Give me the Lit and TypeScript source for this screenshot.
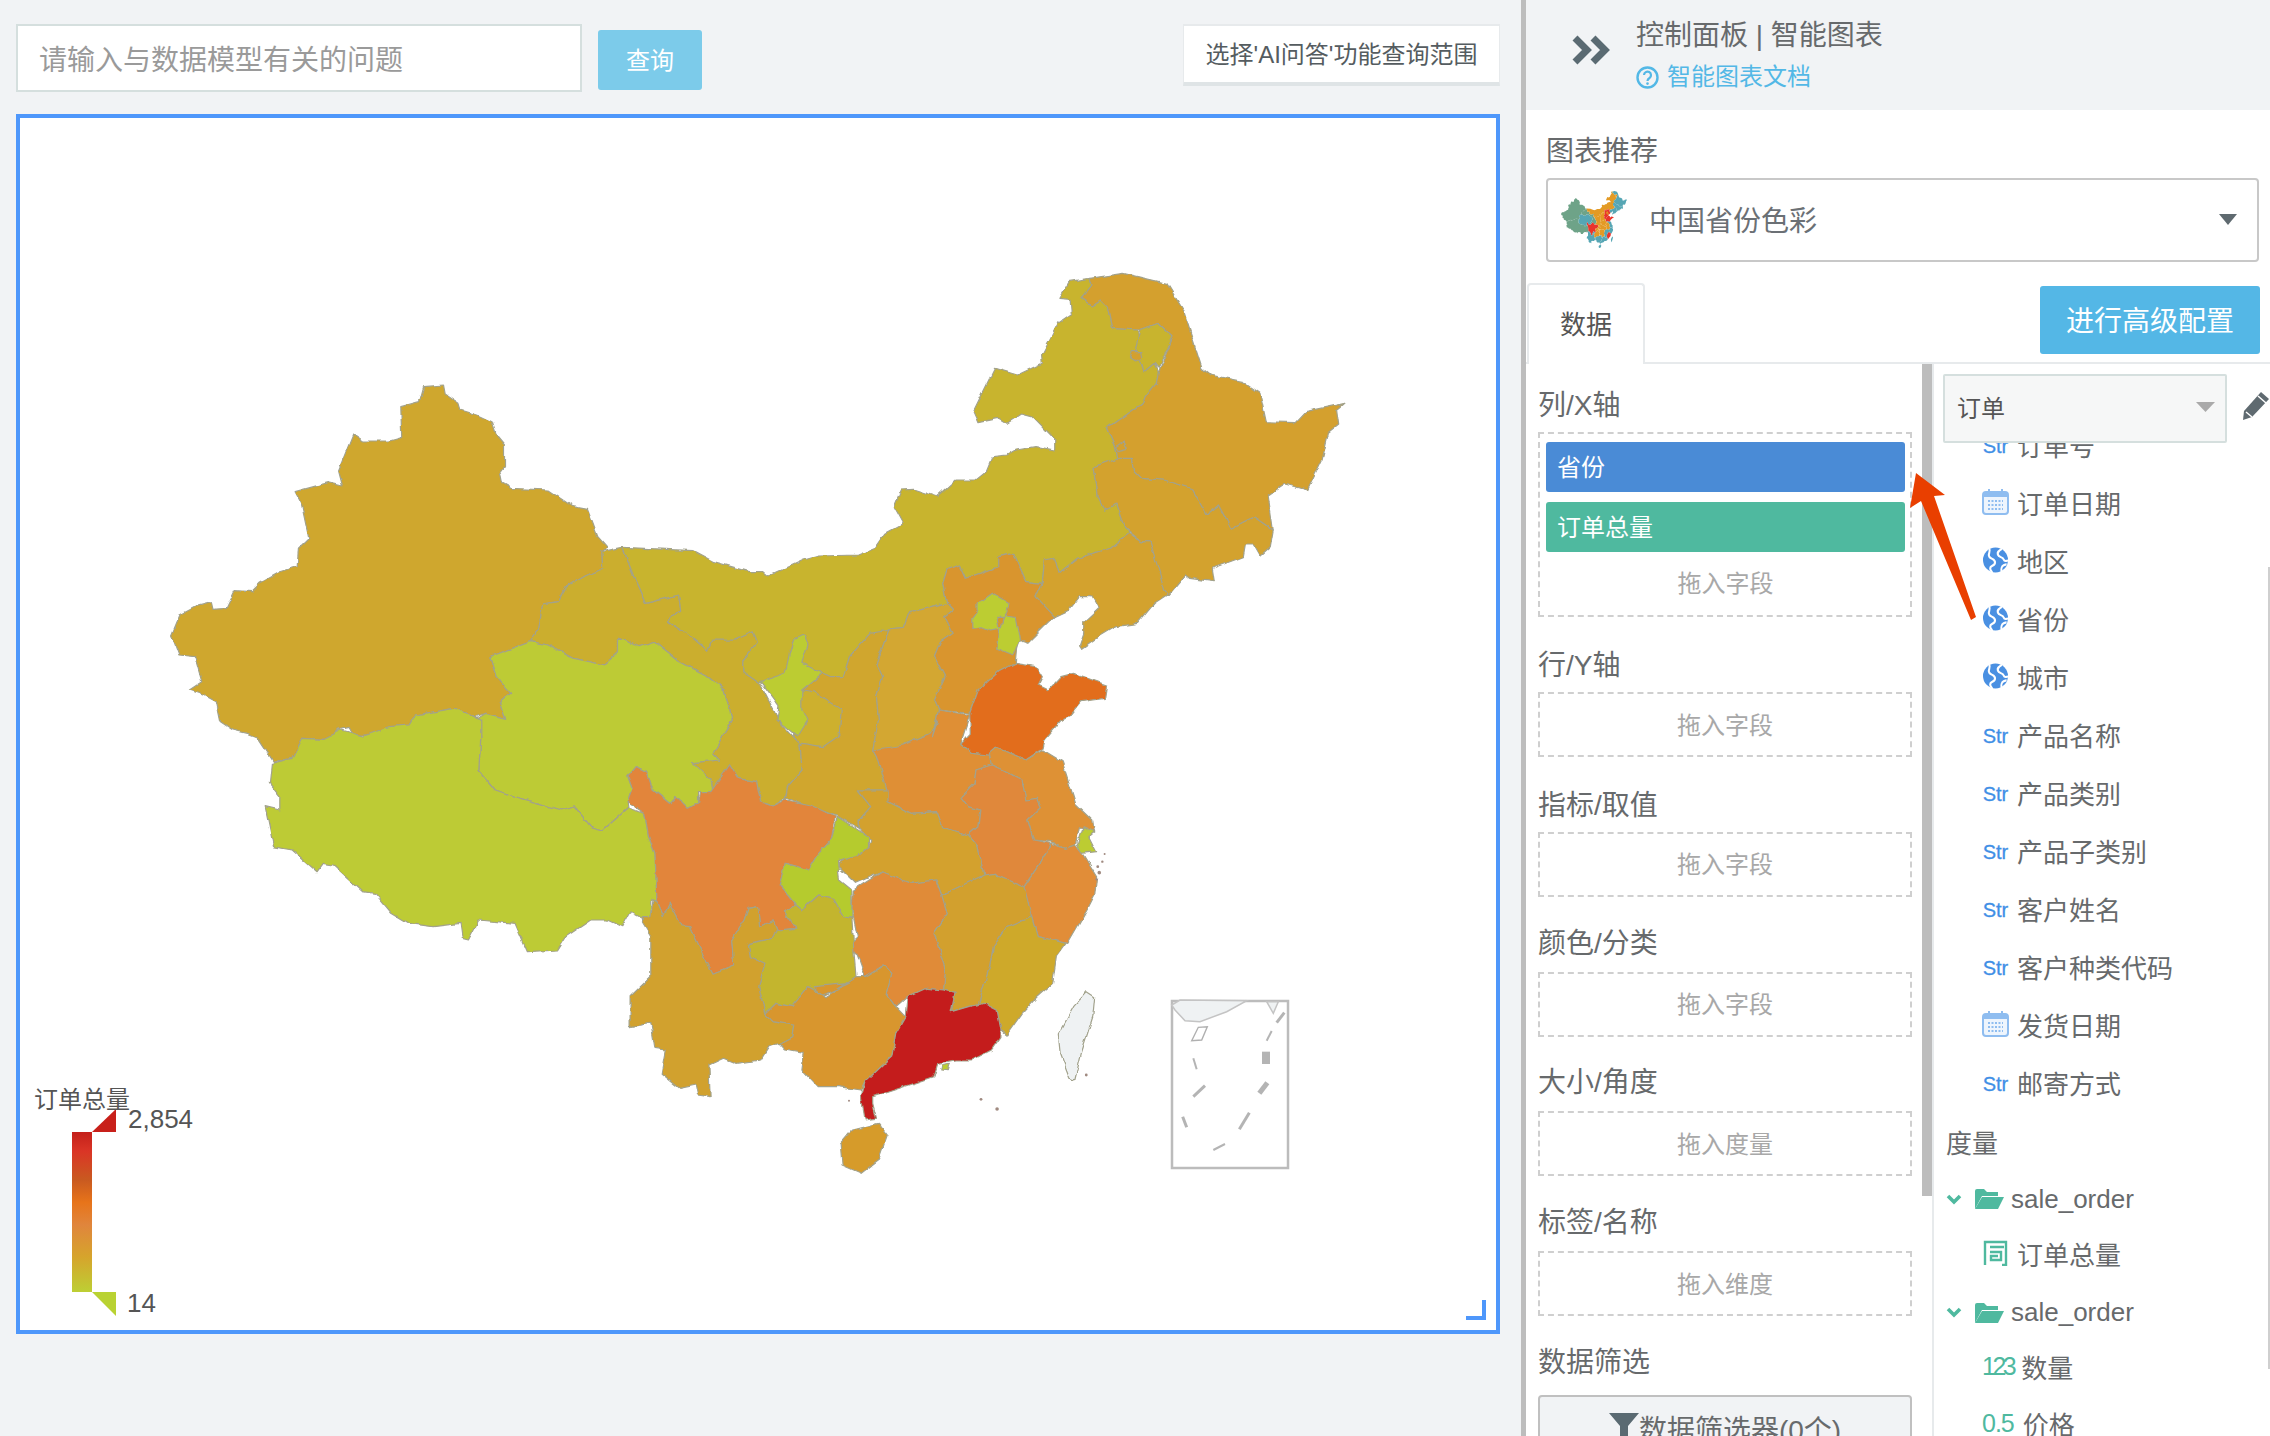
import { LitElement, html, css, svg } from "lit";
import { customElement } from "lit/decorators.js";

type Z = [number, number, number, number];
const Z2: Z = [150, 240, 2.412, 3];
const Z3: Z = [750, 240, 2.412, 3];
const Z4: Z = [230, 720, 2.412, 3];
const Z5: Z = [800, 720, 2.613, 3];
const Z11: Z = [1130, 970, 3, 3];

function pts(z: Z, a: number[]): string {
  const o: string[] = [];
  for (let i = 0; i < a.length; i += 2) {
    o.push(`${(z[0] + a[i] / z[2]).toFixed(1)},${(z[1] + a[i + 1] / z[3]).toFixed(1)}`);
  }
  return o.join(" ");
}

type Prov = { c: string; t: string; s: [Z, number[]][] };
const TEAL = "#56a6b4", GRN = "#6ea388", ORG = "#e39a24", RED = "#e8352b";

const PROVINCES: Prov[] = [
  { c: "#cfa72f", t: GRN, s: [[Z2, [660,440,708,435,712,462,745,490,750,510,790,525,825,545,835,585,855,615,855,680,843,700,848,730,870,745,960,750,1020,800,1055,808,1080,890,1103,922,1090,935,1092,985,1050,1008,1005,1040,985,1085,945,1092,935,1170,918,1205,820,1250,835,1310,870,1360,845,1385,858,1435,810,1420,785,1430,735,1405,640,1425,625,1455,590,1460,545,1485,490,1485,480,1462,455,1470,435,1497]], [Z4, [225,58,175,55,150,115,105,125]], [Z2, [258,1490,235,1480,200,1470,170,1445,160,1385,130,1365,95,1350,125,1325,108,1250,70,1245,52,1185,72,1125,110,1100,148,1088,152,1108,185,1105,205,1052,245,1055,265,1030,315,995,355,980,358,925,383,895,365,790,350,755,430,728,465,738,455,690,490,582,515,603,575,603,607,592,605,500,650,485]]] },
  { c: "#cbae2f", t: GRN, s: [[Z2, [1090,935,1140,922,1170,1020,1195,1090,1275,1065,1280,1110,1250,1145,1305,1190,1345,1230,1355,1200,1410,1200,1455,1175,1465,1210,1430,1260,1430,1295,1470,1330,1500,1400,1520,1450]], [Z4, [1375,75,1380,150,1345,200,1340,235,1310,258,1280,245,1270,185,1225,175,1205,135,1165,215,1160,180,1115,128,1180,120,1165,100,1210,0]], [Z2, [1380,1490,1405,1440,1385,1350,1340,1305,1270,1260,1215,1205,1180,1220,1130,1195,1130,1235,1095,1275,1020,1255,960,1215,918,1205,935,1170,945,1092,985,1085,1005,1040,1050,1008,1092,985]]] },
  { c: "#c8b42e", t: ORG, s: [[Z2, [1140,922,1310,932,1360,965,1445,995,1478,995,1490,1008]], [Z3, [50,1005,130,960,165,948,260,945,300,925,325,880,370,850,348,800,365,750,395,748,450,770,495,720,545,720,570,695,585,650,620,645,640,630,690,620,735,630,735,600,680,530,655,522,620,550,600,535,550,548,538,515,590,385,645,405,705,370,703,345,745,245,775,220,772,178,745,175,770,125,820,115,825,135,800,175,825,195,845,180,865,205,875,265,935,270,945,370,950,395,975,370,985,400,980,430,955,470,945,490,860,565,880,620,885,655,830,680,840,770,855,810,885,795,905,870,915,880,870,925,790,955,745,1000,735,955,710,960,705,1030,665,1025,635,940,600,950,600,980,520,1015,505,975,475,990,465,1030,475,1090,430,1105,385,1115,370,1165,335,1170,320,1185,290,1180,240,1250,225,1310,195,1310,130,1275,100,1340]], [Z2, [1530,1305,1470,1330,1430,1295,1430,1260,1465,1210,1455,1175,1410,1200,1355,1200,1345,1230,1305,1190,1250,1145,1280,1110,1275,1065,1195,1090,1170,1020]]] },
  { c: "#bdcb34", t: TEAL, s: [[Z2, [820,1250,918,1205,960,1215,1020,1255,1095,1275,1130,1235,1130,1195,1180,1220,1215,1205,1270,1260,1340,1305,1385,1350,1405,1440,1380,1490]], [Z4, [1210,0,1165,100,1180,120,1115,128,1160,180,1165,215,1130,215,1130,250,1100,262,1075,230,1060,250,1020,210,1005,155,980,140,960,170,970,205,958,245,960,265,900,330,870,320,830,258,800,270,700,235,640,210,600,150,605,50,595,0]], [Z2, [785,1440,810,1420,858,1435,845,1385,870,1360,835,1310]]] },
  { c: "#bdcb34", t: GRN, s: [[Z4, [100,130,150,115,175,55,225,58,270,30,320,48,385,20]], [Z2, [625,1455,640,1425,735,1405,785,1430,798,1442]], [Z4, [605,50,600,150,640,210,700,235,800,270,830,258,870,320,900,330,960,265,1000,280,1010,350,1025,400,1030,545,1015,535,1015,590,995,595,965,575,945,620,910,600,870,600,810,650,790,690,715,695,685,610,600,600,575,660,560,655,555,610,490,620,430,610,390,580,350,520,320,515,250,435,225,430,210,455,150,390,105,380,85,260,120,270,120,230,95,190]]] },
  { c: "#d0a62f", t: ORG, s: [[Z3, [290,1180,335,1170,305,1270,320,1310,305,1370]], [Z5, [205,0,190,90,200,110,230,210,150,210,185,260,155,300,155,325,100,290,30,260,0,250]], [Z4, [1400,258,1340,235,1345,200,1380,150,1375,75,1360,50]], [Z3, [105,1400,130,1275,195,1310,225,1310,240,1250]]] },
  { c: "#cdb02f", t: ORG, s: [[Z3, [125,1350,155,1355,220,1410,215,1490]], [Z5, [105,45,60,80,5,70]], [Z4, [1375,75,1360,50]]] },
  { c: "#bccc33", t: ORG, s: [[Z3, [105,1200,130,1185,140,1215,125,1270,175,1300,125,1350,125,1410,140,1440,115,1490,65,1440,70,1400,25,1325,85,1300,95,1240]]] },
  { c: "#d3a730", t: ORG, s: [[Z3, [335,1170,370,1165,385,1115,430,1105,475,1090,490,1110,470,1130,490,1180,460,1205,445,1250,470,1310,445,1380,455,1410,440,1490]], [Z5, [360,0,340,40,270,75,200,105,190,90,205,0]], [Z3, [305,1370,320,1310,305,1270]]] },
  { c: "#d9952f", t: RED, s: [[Z3, [465,1030,475,990,505,975,520,1015,600,980,600,950,635,940,665,1025,705,1030,690,1070,735,1130,710,1160,670,1210,645,1200,640,1270,600,1295,550,1350,530,1420,455,1410,445,1380,470,1310,445,1250,460,1205,490,1180,470,1130,490,1110,475,1090]]] },
  { c: "#bccd33", t: ORG, s: [[Z3, [585,1060,625,1090,620,1115,600,1165,580,1170,560,1160,535,1165,535,1135,550,1110,550,1090]]] },
  { c: "#bccd33", t: ORG, s: [[Z3, [615,1125,640,1130,650,1200,635,1245,595,1225,600,1160]]] },
  { c: "#d9952f", t: ORG, s: [[Z3, [595,1132,610,1132,607,1160,600,1160]]] },
  { c: "#d3a22f", t: TEAL, s: [[Z3, [915,880,945,905,965,905,1005,1050,1005,1065,975,1090,935,1150,880,1160,840,1190,800,1225,795,1215,805,1180,805,1145,840,1105,825,1070,795,1070,770,1110,735,1130,690,1070,705,1030,710,960,735,955,745,1000,790,955,870,925]]] },
  { c: "#d3a22f", t: TEAL, s: [[Z3, [885,655,920,655,925,690,945,715,1000,720,1065,745,1100,825,1130,795,1160,865,1215,830,1262,870,1255,920,1230,948,1215,915,1195,915,1190,950,1115,985,1120,1025,1060,1015,1050,1005,1010,1065,1000,1050,965,905,945,905,915,875,905,870,885,795,855,810,840,770,830,680]]] },
  { c: "#d4a02f", t: TEAL, s: [[Z3, [820,115,900,100,1005,130,1045,210,1090,385,1110,405,1190,425,1230,460,1245,545,1315,548,1340,515,1435,490,1415,510,1420,555,1395,580,1380,660,1345,750,1290,732,1250,765,1262,870,1215,830,1160,865,1130,795,1100,825,1065,745,1000,720,945,715,925,690,920,655,885,655,880,620,860,565,945,490,955,470,980,430,985,400,1020,290,985,250,940,270,875,265,865,205,845,180,825,195,800,175,825,135]]] },
  { c: "#c8b42e", t: ORG, s: [[Z3, [940,270,985,250,1020,290,985,385,975,370,950,395,945,370,930,325]]] },
  { c: "#d4a02f", t: ORG, s: [[Z3, [920,335,942,335,945,352,930,360,915,348]]] },
  { c: "#d4a02f", t: ORG, s: [[Z3, [882,622,902,605,910,625,888,632]]] },
  { c: "#df8f34", t: ORG, s: [[Z5, [190,90,270,75,340,40,360,0]], [Z3, [440,1490,455,1410,530,1425]], [Z5, [420,70,450,100,495,105,500,135,460,150,455,190,420,230,440,260,470,270,465,320,440,345,370,320,355,275,290,280,230,245,225,210,200,110]]] },
  { c: "#e26d1c", t: RED, s: [[Z3, [640,1270,690,1280,705,1310,695,1335,720,1350,750,1310,780,1300,860,1335,855,1375,800,1385,770,1430]], [Z5, [685,0,640,60,635,85,590,120,550,100,510,85,495,105,450,100,420,70,445,40]], [Z3, [530,1420,550,1350,600,1295]]] },
  { c: "#de9135", t: TEAL, s: [[Z5, [495,100,510,85,550,100,590,120,635,90,685,125,720,250,765,300,770,340,730,320,720,375,690,385,655,365,610,360,595,300,630,260,620,235,590,240,580,180,530,150,500,135]]] },
  { c: "#bccc33", t: TEAL, s: [[Z5, [740,320,770,335,755,350,775,395,735,400,725,375]]] },
  { c: "#e0883a", t: ORG, s: [[Z5, [500,135,530,150,580,180,590,240,620,235,630,260,595,300,610,360,655,370,630,425,585,500,520,470,510,460,480,465,465,380,440,345,465,320,470,270,440,260,420,230,455,190,460,150]]] },
  { c: "#e18d38", t: TEAL, s: [[Z5, [655,370,690,385,720,375,740,405,775,470,770,525,750,570,725,620,700,670,660,660,620,650,605,590,580,510,630,425]]] },
  { c: "#cea92c", t: RED, s: [[Z5, [605,590,620,650,660,660,695,670,670,710,660,790,620,830,580,880,540,945,525,930,515,870,480,850,465,855,495,740,505,680,540,620]]] },
  { c: "#d2a02d", t: TEAL, s: [[Z5, [370,525,480,465,510,460,520,470,585,500,605,590,540,620,505,680,495,740,465,855,440,860,395,875,405,820,375,810,380,750,350,640,385,580]]] },
  { c: "#d3a12e", t: ORG, s: [[Z5, [230,210,230,245,290,280,355,275,370,320,440,345,465,380,480,465,370,525,355,480,290,490,215,455,145,490,100,440,100,430,180,380,185,365,155,325,155,300,185,260,150,210]]] },
  { c: "#e08b38", t: ORG, s: [[Z5, [140,510,215,455,290,490,355,480,370,525,385,580,350,640,380,750,375,810,330,805,280,830,250,860,225,820,240,760,220,735,170,770,150,705,120,680,150,650,135,565]]] },
  { c: "#e2853a", t: RED, s: [[Z4, [960,170,980,140,1005,155,1020,210,1060,250,1075,230,1100,262,1130,250,1135,215,1160,215,1205,135,1225,175,1270,185,1280,245,1310,258,1340,240,1400,255,1460,290,1450,360,1420,400,1395,450,1340,430,1325,495,1365,555,1335,575,1365,625,1320,630,1310,600,1280,620,1275,560,1250,565,1240,600,1210,660,1215,735,1165,760,1145,715,1110,620,1090,618,1060,550,1045,590,1030,545,1025,400,1010,350,1000,280,958,245,970,205]]] },
  { c: "#b5cb2e", t: ORG, s: [[Z4, [1465,290,1540,350,1540,380,1510,410,1465,425,1470,480,1500,510,1500,595,1480,590,1455,535,1420,525,1380,570,1365,555,1325,495,1340,430,1370,440,1395,450,1420,400,1450,360]]] },
  { c: "#c3b52e", t: ORG, s: [[Z4, [1250,670,1310,655,1320,630,1365,625,1335,575,1365,555,1380,570,1420,525,1455,535,1480,590,1500,595,1505,700,1510,770,1495,790,1430,825,1395,800,1355,860,1315,850,1290,880,1275,800,1290,730,1255,710]]] },
  { c: "#d1a12d", t: TEAL, s: [[Z4, [1020,540,1030,545,1045,590,1060,550,1090,618,1110,620,1145,715,1165,760,1215,735,1210,660,1240,600,1250,565,1275,560,1280,620,1310,600,1320,630,1310,655,1250,670,1255,710,1290,730,1275,800,1290,880,1310,905,1360,915,1355,950,1325,970,1300,980,1280,1020,1220,1030,1190,1015,1155,1035,1158,1130,1130,1125,1125,1095,1085,1105,1040,1060,1050,990,1025,985,1015,910,965,920,965,830,1015,770,1015,650,995,610,995,590,1015,590]]] },
  { c: "#d8962e", t: TEAL, s: [[Z4, [1290,880,1315,850,1355,860,1395,800,1430,825,1495,790]], [Z5, [35,800,65,830,120,790,145,770,170,770,220,735,240,760,225,820,250,860,275,890,250,940,240,1010,170,1085,160,1110,100,1100,45,1100,5,1050]], [Z4, [1385,1000,1340,990,1325,970,1355,950,1360,915,1310,905]]] },
  { c: "#c41f1a", t: TEAL, s: [[Z5, [280,830,330,805,375,810,405,820,395,875,440,860,465,855,480,850,515,870,525,930,525,950,500,990,450,1020,405,1020,360,1030,350,1070,300,1090,220,1120,190,1130,190,1150,200,1195,170,1200,160,1130,170,1085,240,1010,250,940,275,890]]] },
  { c: "#bccc33", t: TEAL, s: [[Z5, [370,1035,390,1030,385,1052,368,1050]]] },
  { c: "#d69b2c", t: TEAL, s: [[Z5, [105,1270,135,1230,205,1210,228,1245,205,1320,160,1360,110,1335]]] },
  { c: "#eff2f3", t: TEAL, s: [[Z5, [750,815,770,830,765,890,735,1000,718,1080,705,1075,680,1000,675,945,715,860]]] },
];

const ISLANDS: [number, number, number][] = [
  [128,1142,1],[473,1138,1.4],[515,1167,1.8],[748,1065,1.4],[796,402,1],[790,425,1.2],[778,440,1.4],[782,458,1.8],[775,478,1.2],
];

const SEAS: [number, number, number, number, number][] = [
  [190,265,200,298,2],[190,380,225,347,3],[158,440,170,472,3],[250,540,285,522,2],[328,478,358,428,3],[388,370,412,338,5],[408,245,408,282,8],[410,212,425,183,2],[440,158,463,128,3],
];

const SLOTS = [
  { t: "行/Y轴", p: "拖入字段", low: true },
  { t: "指标/取值", p: "拖入字段", low: true },
  { t: "颜色/分类", p: "拖入字段", low: false },
  { t: "大小/角度", p: "拖入度量", low: false },
  { t: "标签/名称", p: "拖入维度", low: false },
];

const FIELDS: [string, string][] = [
  ["str", "订单号"], ["cal", "订单日期"], ["geo", "地区"], ["geo", "省份"], ["geo", "城市"],
  ["str", "产品名称"], ["str", "产品类别"], ["str", "产品子类别"], ["str", "客户姓名"],
  ["str", "客户种类代码"], ["cal", "发货日期"], ["str", "邮寄方式"],
];

const folderIcon = html`<svg class="folder" viewBox="0 0 30 20"><path d="M1 20V2a2 2 0 0 1 2-2h7l3 3h11v4H8L1 20z" fill="#4fb99f"/><path d="M8 8h22l-6 12H1z" fill="#4fb99f"/></svg>`;
const chevIcon = html`<svg class="chev" viewBox="0 0 16 11"><path d="M2 2l6 6 6-6" fill="none" stroke="#4fb99f" stroke-width="3.6"/></svg>`;
const calIcon = html`<svg class="ico" viewBox="0 0 27 26"><rect x="1" y="3" width="25" height="22" rx="3" fill="#eef5fd" stroke="#8fbdf0" stroke-width="2"/><rect x="1" y="3" width="25" height="5" fill="#8fbdf0"/><path d="M7 0v5M20 0v5" stroke="#8fbdf0" stroke-width="2"/><path d="M6 12h15M6 16h15M6 20h15" stroke="#8fbdf0" stroke-width="2" stroke-dasharray="2 1.5"/></svg>`;
const geoIcon = html`<svg class="ico" viewBox="0 0 27 27"><circle cx="13.5" cy="13.5" r="13" fill="#4a90e2"/><path d="M7 2c2 3-2 5 0 8s6 2 6 6-5 3-5 6 2 3 2 5M20 2c-3 2-5 3-4 6s5 2 6 5 3 1 5 1M20 26c-1-3 0-6 2-7s2-1 3-1" fill="none" stroke="#fff" stroke-width="2.2"/></svg>`;
const pencilIcon = html`<svg class="pencil" viewBox="0 0 28 30"><path d="M2 21L19 2l8 7L10 27l-9 3z" fill="#5f6a70"/><path d="M16 6l8 7M4 22l6 5" stroke="#fff" stroke-width="1.5"/></svg>`;

@customElement("app-root")
export class AppRoot extends LitElement {
  static styles = css`
    :host {
      display: block;
      width: 2270px;
      height: 1436px;
      position: relative;
      overflow: hidden;
      background: #f1f3f5;
      font-family: "Liberation Sans", "Noto Sans CJK SC", sans-serif;
      color: #676a6c;
    }
    .page { display: flex; height: 1436px; }
    .left { flex: 0 0 1521px; padding: 24px 21px 0 16px; box-sizing: border-box; }
    .top { display: flex; align-items: flex-start; height: 90px; }
    .ask {
      width: 566px; height: 68px; box-sizing: border-box;
      background: #fff; border: 2px solid #d5dfde; display: flex; align-items: center;
      padding-left: 21px; font-size: 28px; color: #9a9a9a;
    }
    .query {
      width: 104px; height: 60px; margin: 6px 0 0 16px; background: #7ccbea; color: #fff; box-sizing: border-box;
      border-radius: 3px; font-size: 24px; display: flex; align-items: center; justify-content: center; padding-bottom: 4px;
    }
    .scope {
      margin-left: auto; width: 317px; height: 62px; box-sizing: border-box; background: #fff;
      border: 1px solid #e7eaec; border-top-width: 2px; border-bottom: 4px solid #dfe4e6; padding-bottom: 4px;
      font-size: 24px; color: #555c60; display: flex; align-items: center; justify-content: center;
    }
    .chart {
      width: 1484px; height: 1220px; box-sizing: border-box; border: 4px solid #4e97fb;
      background: #fff; position: relative;
    }
    .chart > svg { display: block; width: 1476px; height: 1212px; }
    .lg { font-size: 24px; fill: #555; font-family: "Liberation Sans", "Noto Sans CJK SC", sans-serif; }
    .num-lg { font-size: 26px; }
    .handle {
      position: absolute; right: 10px; bottom: 10px; width: 16px; height: 16px;
      border-right: 4px solid #4e97fb; border-bottom: 4px solid #4e97fb;
    }
    .bar { flex: 0 0 5px; background: #bdbdbd; }
    .panel { flex: 1; background: #fff; display: flex; flex-direction: column; min-width: 0; }
    .head {
      height: 110px; background: #f1f3f5; display: flex; align-items: flex-start; padding-left: 46px; flex: none;
    }
    .dbl { width: 38px; height: 30px; margin-top: 35px; }
    .head-t { margin-left: 26px; padding-top: 16px; }
    .head-title { font-size: 28px; line-height: 40px; color: #676a6c; white-space: nowrap; }
    .doc { display: flex; align-items: center; font-size: 24px; line-height: 34px; color: #53b8e6; margin-top: 4px; }
    .doc svg { width: 23px; height: 23px; margin-right: 8px; }
    .rec { padding: 22px 11px 0 20px; flex: none; height: 173px; box-sizing: border-box; }
    .rec-l { font-size: 28px; line-height: 40px; }
    .select {
      margin-top: 6px; height: 84px; box-sizing: border-box; border: 2px solid #c8c8c8; border-radius: 4px;
      display: flex; align-items: center; padding: 0 0 2px 13px; font-size: 28px; color: #6b7075;
    }
    .select .thumb { width: 66px; height: 57px; margin-right: 22px; }
    .select .car { margin-left: auto; margin-right: 20px; width: 18px; height: 11px; }
    .tabs { height: 81px; flex: none; display: flex; align-items: flex-start; position: relative; border-bottom: 2px solid #e7eaec; box-sizing: border-box; }
    .tab {
      margin-left: 1px; width: 118px; height: 81px; box-sizing: border-box; border: 2px solid #e7eaec; border-bottom: none;
      border-radius: 4px 4px 0 0; background: #fff; font-size: 26px; display: flex; align-items: center; justify-content: center; color: #555; padding-bottom: 4px;
    }
    .adv {
      margin: 3px 10px 0 auto; width: 220px; height: 68px; background: #54b7e6; color: #fff; border-radius: 3px; box-sizing: border-box;
      font-size: 28px; display: flex; align-items: center; justify-content: center; padding-bottom: 2px;
    }
    .cols { flex: 1; display: flex; min-height: 0; }
    .c1 { flex: 0 0 396px; box-sizing: border-box; padding: 0 10px 0 12px; overflow: hidden; }
    .sb { flex: 0 0 10px; align-self: flex-start; height: 832px; background: #bdbdbd; }
    .c2 { flex: 1; border-left: 2px solid #e7eaec; display: flex; flex-direction: column; min-width: 0; position: relative; }
    .lab { font-size: 28px; height: 40px; line-height: 39px; color: #676a6c; white-space: nowrap; }
    .lab.low { line-height: 43px; }
    .first { margin-top: 20px; }
    .dash {
      margin-top: 8px; border: 2px dashed #cfcfcf; box-sizing: border-box; height: 65px; width: 374px; padding-bottom: 3px;
      display: flex; align-items: center; justify-content: center; color: #a8a8a8; font-size: 24px; margin-bottom: 26.75px;
    }
    .dash.big { height: 185px; display: block; padding: 8px 5px 0 6px; margin-bottom: 27px; }
    .pill { height: 50px; border-radius: 3px; color: #fff; font-size: 24px; display: flex; align-items: center; padding: 0 0 4px 11px; box-sizing: border-box; margin-bottom: 10px; }
    .pill.b { background: #4a8bd6; }
    .pill.g { background: #4fb99f; }
    .drop { height: 46px; display: flex; align-items: center; justify-content: center; color: #a8a8a8; padding-bottom: 8px; box-sizing: border-box; }
    .filter {
      margin-top: 12px; width: 374px; height: 90px; box-sizing: border-box; background: #f1f3f5; border: 2px solid #c0c0c0; border-radius: 4px;
      font-size: 28px; display: flex; justify-content: center; padding-top: 16px; color: #676a6c; white-space: nowrap;
    }
    .filter svg { width: 30px; height: 28px; flex: none; }
    .filter span { line-height: 36px; }
    .src { flex: none; display: flex; padding: 10px 0 0 9px; height: 79px; box-sizing: border-box; position: relative; z-index: 1; }
    .src-box {
      width: 284px; height: 69px; box-sizing: border-box; background: #f6f7f7; border: 2px solid #d5dfde; border-radius: 2px;
      display: flex; align-items: center; padding: 0 0 4px 12px; font-size: 24px; color: #555;
    }
    .src-box svg { margin-left: auto; margin-right: 10px; width: 19px; height: 10px; }
    .pencil { width: 28px; height: 30px; margin: 16px 0 0 15px; flex: none; }
    .list { flex: 1; overflow: hidden; min-height: 0; }
    .inner { margin-top: -28px; }
    .row { height: 58px; display: flex; align-items: center; padding-left: 48px; font-size: 26px; color: #676a6c; white-space: nowrap; }
    .ico { width: 27px; height: 26px; margin-right: 8px; flex: none; }
    .str { width: 27px; margin-right: 8px; padding-top: 5px; font-size: 20px; color: #3f8fe6; flex: none; text-align: center; -webkit-text-stroke: 0.3px #3f8fe6; }
    .sec { height: 56px; display: flex; align-items: center; padding-left: 12px; font-size: 26px; white-space: nowrap; }
    .sec.title { margin-top: 2px; }
    .sec.g1 { margin-top: 2px; }
    .sec.next { margin-top: 3.5px; }
    .chev { width: 16px; height: 11px; margin-right: 12px; flex: none; }
    .folder { width: 30px; height: 20px; margin-right: 7px; flex: none; }
    .row.m { height: 56px; margin-top: -2px; }
    .num { color: #4fb99f; font-size: 25px; margin-right: 8px; letter-spacing: -3.5px; flex: none; }
    .num.h { letter-spacing: -1px; margin-right: 9px; }
    .thumbbar { position: absolute; right: 0; top: 203px; width: 2px; height: 802px; background: #cfcfcf; }
    .arrow { position: absolute; left: 0; top: 0; width: 2270px; height: 1436px; pointer-events: none; }
  `;

  private map() {
    return svg`
      <defs>
        <filter id="rough" filterUnits="userSpaceOnUse" x="100" y="200" width="1300" height="1000">
          <feTurbulence type="fractalNoise" baseFrequency="0.09" numOctaves="2" seed="4" result="n"></feTurbulence>
          <feDisplacementMap in="SourceGraphic" in2="n" scale="5" xChannelSelector="R" yChannelSelector="G"></feDisplacementMap>
        </filter>
        <linearGradient id="lg" x1="0" y1="0" x2="0" y2="1">
          <stop offset="0" stop-color="#c4201a"></stop>
          <stop offset="0.12" stop-color="#da3526"></stop>
          <stop offset="0.3" stop-color="#c95a20"></stop>
          <stop offset="0.44" stop-color="#e7741a"></stop>
          <stop offset="0.58" stop-color="#e0853c"></stop>
          <stop offset="0.78" stop-color="#d6a42c"></stop>
          <stop offset="1" stop-color="#bdcf34"></stop>
        </linearGradient>
      </defs>
      <g stroke="#a2a28c" stroke-width="1.2" stroke-linejoin="round" filter="url(#rough)">
        ${PROVINCES.map((p) => svg`<polygon fill=${p.c} points=${p.s.map(([z, a]) => pts(z, a)).join(" ")}></polygon>`)}
      </g>
      ${ISLANDS.map(([x, y, r]) => svg`<circle cx=${800 + x / 2.613} cy=${720 + y / 3} r=${r} fill="#a08a80"></circle>`)}
      <g>
        <rect x="1172" y="1001" width="116" height="167" fill="#fff" stroke="#bcbcbc" stroke-width="2.5"></rect>
        <polygon points=${pts(Z11, [125,105,150,90,350,92,290,125,210,155,165,152,135,120])} fill="#eff2f3" stroke="#c4c4c4" stroke-width="1.5"></polygon>
        <polygon points=${pts(Z11, [410,95,445,95,430,130])} fill="#eff2f3" stroke="#c4c4c4" stroke-width="1.5"></polygon>
        <polygon points=${pts(Z11, [185,212,205,172,232,170,215,210])} fill="#fff" stroke="#b0b0b0" stroke-width="1.4"></polygon>
        ${SEAS.map(([a, b, c, d, w]) => svg`<line x1=${1130 + a / 3} y1=${970 + b / 3} x2=${1130 + c / 3} y2=${970 + d / 3} stroke="#b4b4b4" stroke-width=${w}></line>`)}
      </g>
      <rect x="72" y="1132" width="20" height="160" fill="url(#lg)"></rect>
      <polygon points="92,1132 116,1132 116,1109" fill="#c8201a"></polygon>
      <polygon points="92,1292 116,1292 116,1316" fill="#b9d232"></polygon>
      <text class="lg" x="34" y="1108">订单总量</text>
      <text class="lg num-lg" x="128" y="1128">2,854</text>
      <text class="lg num-lg" x="127" y="1312">14</text>
    `;
  }

  render() {
    return html`
      <div class="page">
        <div class="left">
          <div class="top">
            <div class="ask">请输入与数据模型有关的问题</div>
            <div class="query">查询</div>
            <div class="scope">选择'AI问答'功能查询范围</div>
          </div>
          <div class="chart">
            <svg viewBox="20 118 1476 1212">${this.map()}</svg>
            <div class="handle"></div>
          </div>
        </div>
        <div class="bar"></div>
        <div class="panel">
          <div class="head">
            <svg class="dbl" viewBox="0 0 38 30"><path d="M3 3l12 12L3 27M21 3l12 12-12 12" fill="none" stroke="#5a6a72" stroke-width="7"/></svg>
            <div class="head-t">
              <div class="head-title">控制面板 | 智能图表</div>
              <div class="doc">
                <svg viewBox="0 0 23 23"><circle cx="11.5" cy="11.5" r="10" fill="none" stroke="#53b8e6" stroke-width="2.4"/><path d="M8 9a3.500 3.500 0 1 1 5.500 3c-1.400.9-2 1.400-2 3" fill="none" stroke="#53b8e6" stroke-width="2.2"/><circle cx="11.500" cy="17.600" r="1.300" fill="#53b8e6"/></svg>
                智能图表文档
              </div>
            </div>
          </div>
          <div class="rec">
            <div class="rec-l">图表推荐</div>
            <div class="select">
              <svg class="thumb" viewBox="170 272 1175 900" preserveAspectRatio="none">
                ${PROVINCES.map((p) => svg`<polygon fill=${p.t} points=${p.s.map(([z, a]) => pts(z, a)).join(" ")}></polygon>`)}
              </svg>
              中国省份色彩
              <svg class="car" viewBox="0 0 18 11"><path d="M0 0h18L9 11z" fill="#5f6a70"/></svg>
            </div>
          </div>
          <div class="tabs">
            <div class="tab">数据</div>
            <div class="adv">进行高级配置</div>
          </div>
          <div class="cols">
            <div class="c1">
              <div class="lab first low">列/X轴</div>
              <div class="dash big">
                <div class="pill b">省份</div>
                <div class="pill g">订单总量</div>
                <div class="drop">拖入字段</div>
              </div>
              ${SLOTS.map((s) => html`<div class="lab ${s.low ? "low" : ""}">${s.t}</div><div class="dash">${s.p}</div>`)}
              <div class="lab">数据筛选</div>
              <div class="filter">
                <svg viewBox="0 0 30 28"><path d="M0 0h30L19 13v15h-8V13z" fill="#5a6a72"/></svg>
                <span>数据筛选器(0个)</span>
              </div>
            </div>
            <div class="sb"></div>
            <div class="c2">
              <div class="src">
                <div class="src-box">订单<svg viewBox="0 0 19 10"><path d="M0 0h19L9.500 10z" fill="#aaa"/></svg></div>
                ${pencilIcon}
              </div>
              <div class="list">
                <div class="inner">
                  ${FIELDS.map(([k, t]) => html`<div class="row">
                    ${k === "str" ? html`<span class="str">Str</span>` : k === "cal" ? calIcon : geoIcon}${t}
                  </div>`)}
                  <div class="sec title">度量</div>
                  <div class="sec g1">${chevIcon}${folderIcon}sale_order</div>
                  <div class="row m">
                    <svg class="ico" viewBox="0 0 27 26"><path d="M3 25V2h21v23h-4M8 7h14M8 12h11v8H9v-4h7" fill="none" stroke="#4fb99f" stroke-width="2.400"/></svg>订单总量
                  </div>
                  <div class="sec next">${chevIcon}${folderIcon}sale_order</div>
                  <div class="row m"><span class="num">123</span>数量</div>
                  <div class="row"><span class="num h">0.5</span>价格</div>
                </div>
              </div>
              <div class="thumbbar"></div>
            </div>
          </div>
        </div>
      </div>
      <svg class="arrow" viewBox="0 0 2270 1436">
        <path d="M1916 473L1945 495 1934 496 1976 617 1971 620 1921 501 1910 508z" fill="#e93f00"/>
      </svg>
    `;
  }
}
